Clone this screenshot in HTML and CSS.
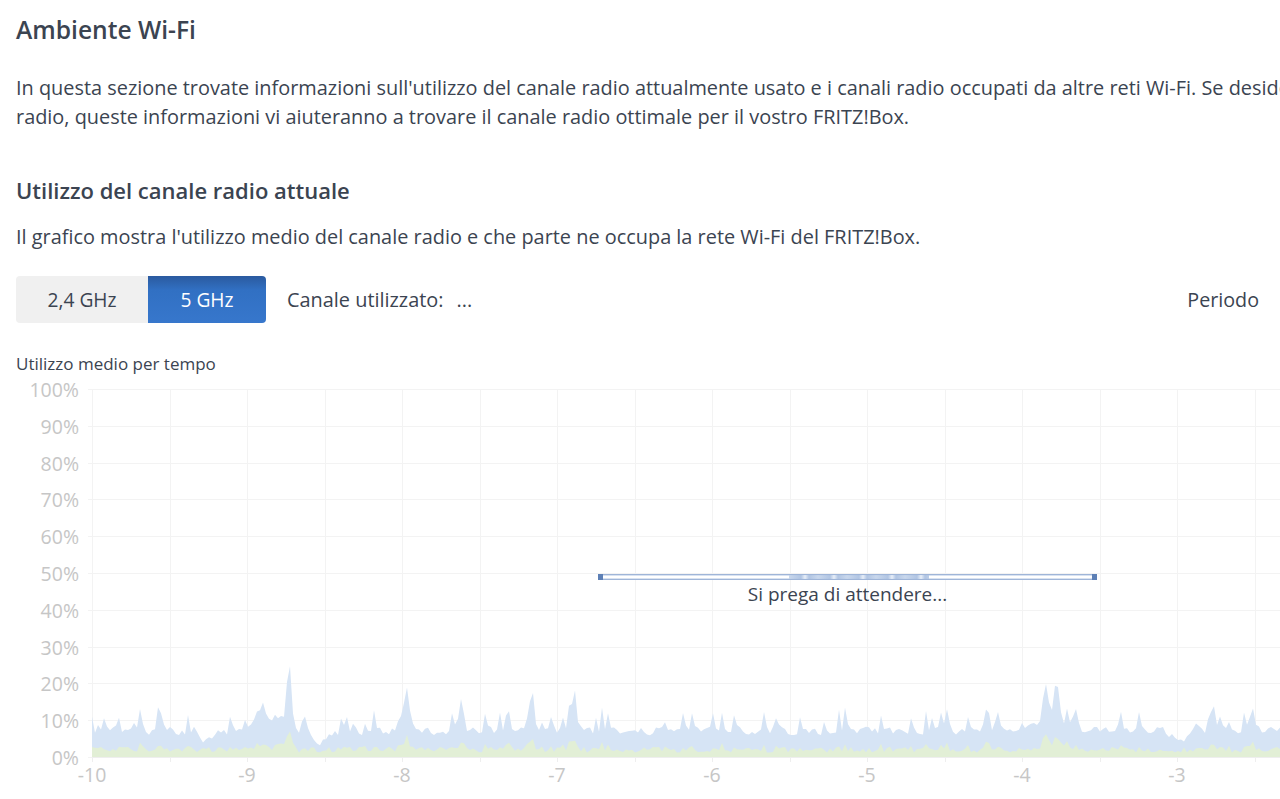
FILE: index.html
```html
<!DOCTYPE html>
<html lang="it">
<head>
<meta charset="utf-8">
<title>Ambiente Wi-Fi</title>
<link rel="stylesheet" href="styles.css">
</head>
<body>
<div class="page">
  <h1 class="title">Ambiente Wi-Fi</h1>
  <p class="intro">In questa sezione trovate informazioni sull'utilizzo del canale radio attualmente usato e i canali radio occupati da altre reti Wi-Fi. Se desiderate cambiare il canale radio, queste informazioni vi aiuteranno a trovare il canale radio ottimale per il vostro FRITZ!Box.</p>
  <h2 class="subtitle">Utilizzo del canale radio attuale</h2>
  <p class="desc">Il grafico mostra l'utilizzo medio del canale radio e che parte ne occupa la rete Wi-Fi del FRITZ!Box.</p>
  <div class="toolbar">
    <div class="segmented">
      <button class="seg">2,4 GHz</button>
      <button class="seg active">5 GHz</button>
    </div>
    <div class="channel">Canale utilizzato:<span class="channel-value">...</span></div>
    <div class="period">Periodo</div>
  </div>
  <div class="chart-title">Utilizzo medio per tempo</div>
  <div class="chart">
    <svg class="chart-svg" width="1280" height="424" viewBox="0 375 1280 424" xmlns="http://www.w3.org/2000/svg">
      <g id="grid" class="grid"></g>
      <path id="blue" class="area-blue" d=""></path>
      <path id="green" class="area-green" d=""></path>
      <g id="axes" class="axes"></g>
    </svg>
    <div class="loading">
      <div class="bar"><span class="cap left"></span><span class="glow"></span><span class="cap right"></span></div>
      <div class="loading-text">Si prega di attendere...</div>
    </div>
  </div>
</div>
<script src="script.js"></script>
</body>
</html>
```

FILE: styles.css
```css
html, body {
  margin: 0;
  padding: 0;
  background: #ffffff;
  overflow: hidden;
}
body {
  font-family: "Open Sans", Lato, sans-serif;
  color: #3b4451;
  width: 1280px;
  height: 799px;
}
.page {
  padding: 0 16px;
}
.title {
  margin: 15px 0 0;
  font-size: 24.6px;
  line-height: 30px;
  font-weight: 600;
  color: #3b4451;
}
.intro {
  margin: 28px 0 0;
  font-size: 19.9px;
  line-height: 29px;
  width: 1530px;
}
.subtitle {
  margin: 45px 0 0;
  font-size: 22px;
  line-height: 28px;
  font-weight: 600;
}
.desc {
  margin: 18px 0 0;
  font-size: 19.9px;
  line-height: 29px;
}
.toolbar {
  margin-top: 25px;
  display: flex;
  align-items: center;
  height: 47px;
}
.segmented {
  display: flex;
  height: 47px;
}
.seg {
  font-family: inherit;
  font-size: 19.2px;
  border: 0;
  margin: 0;
  padding: 0;
  height: 47px;
  color: #3b4451;
  background: #f0f0f0;
  width: 132px;
  border-radius: 4px 0 0 4px;
  cursor: pointer;
}
.seg.active {
  width: 118px;
  color: #ffffff;
  background: linear-gradient(#2a5a9f 0%, #3170c3 30%, #3777cc 100%);
  border-radius: 0 4px 4px 0;
}
.channel {
  margin-left: 21px;
  font-size: 19.9px;
}
.channel-value {
  margin-left: 13px;
}
.period {
  margin-left: auto;
  margin-right: 5px;
  font-size: 19.7px;
}
.chart-title {
  margin-top: 30px;
  font-size: 17px;
  line-height: 22px;
}
.chart {
  position: relative;
  margin-left: -16px;
  width: 1280px;
  height: 424px;
}
.chart-svg {
  display: block;
}
.grid line {
  stroke: #f3f3f3;
  stroke-width: 1;
}
.axes line {
  stroke: #eeeeee;
  stroke-width: 1;
}
.axes text {
  font-family: "Open Sans", Lato, sans-serif;
  font-size: 19.5px;
  fill: #c6c6c6;
}
.area-blue {
  fill: #d6e4f5;
}
.area-green {
  fill: #e2efd6;
}
.loading {
  position: absolute;
  left: 598px;
  top: 199px;
  width: 499px;
  display: flex;
  flex-direction: column;
  align-items: center;
}
.bar {
  position: relative;
  width: 499px;
  height: 6px;
  box-sizing: border-box;
  border: 1px solid #9fb5d8;
  background: #ffffff;
  box-shadow: inset 0 0 0 1px #d8e2f1;
}
.cap {
  position: absolute;
  top: -1px;
  width: 5px;
  height: 6px;
  background: #5d80b6;
}
.cap.left { left: -1px; }
.cap.right { right: -1px; }
.glow {
  position: absolute;
  left: 190px;
  top: 0;
  width: 140px;
  height: 4px;
  background: repeating-linear-gradient(90deg, #c3d3ea 0px, #a9bfe0 12px, #e6edf7 16px, #a9bfe0 20px, #c3d3ea 29px);
  opacity: 0.9;
}
.loading-text {
  margin-top: 2px;
  font-size: 19px;
  line-height: 25px;
  color: #3b4451;
}
```

FILE: script.js
```js
(function () {
  var NS = "http://www.w3.org/2000/svg";
  var X0 = 92, XN = 1280, YTOP = 389, YBOT = 757;
  var PX_PER_UNIT = 155;
  function y(p) { return YBOT - (YBOT - YTOP) * p / 100; }

  var grid = document.getElementById("grid");
  var axes = document.getElementById("axes");
  function line(g, x1, y1, x2, y2) {
    var l = document.createElementNS(NS, "line");
    l.setAttribute("x1", x1); l.setAttribute("y1", y1);
    l.setAttribute("x2", x2); l.setAttribute("y2", y2);
    g.appendChild(l);
  }
  function text(g, x, yy, s, anchor) {
    var t = document.createElementNS(NS, "text");
    t.setAttribute("x", x); t.setAttribute("y", yy);
    t.setAttribute("text-anchor", anchor);
    t.textContent = s;
    g.appendChild(t);
  }
  for (var k = 0; k <= 10; k++) {
    var yy = Math.round(y(k * 10)) + 0.5;
    line(grid, 88, yy, XN, yy);
    text(axes, 79, yy + 7, (k * 10) + "%", "end");
  }
  for (var j = 0; j < 20; j++) {
    var xx = Math.round(X0 + j * PX_PER_UNIT / 2) + 0.5;
    if (xx > XN) break;
    line(grid, xx, YTOP, xx, YBOT);
    line(axes, xx, YBOT, xx, YBOT + 5);
  }
  line(axes, X0, YBOT + 0.5, XN, YBOT + 0.5);
  for (var n = 0; n < 9; n++) {
    var lx = X0 + n * PX_PER_UNIT;
    if (lx > XN) break;
    text(axes, lx, 782, String(-10 + n), "middle");
  }

  var seed = 24680;
  function rnd() { seed = (seed * 1103515245 + 12345) % 2147483648; return seed / 2147483648; }
  var bumps = [
    [289, 23, 1.8], [282, 5, 10], [262, 4, 9], [256, 4, 3], [405, 6, 7], [118, 6, 1.5], [135, 5, 1.5],
    [532, 8, 2], [575, 6, 2], [1045, 12, 3], [1056, 6, 5], [1210, 7, 2.5], [1045, 3, 15], [160, 4, 5], [460, 5, 3], [775, 4, 2]
  ];
  var dips = [[205, 3, 10], [320, 3, 10], [1180, 2, 10]];
  var blue = [], green = [];
  var step = 3;
  var prev = 8;
  for (var x = X0; x <= XN + step; x += step) {
    var r = rnd();
    var v = 5.8 + 2.6 * r;
    if (rnd() < 0.22) v += 2.5 + 5 * rnd();
    for (var b = 0; b < bumps.length; b++) {
      var d = (x - bumps[b][0]) / bumps[b][2];
      v += bumps[b][1] * Math.exp(-d * d);
    }
    for (var q = 0; q < dips.length; q++) {
      var dd = (x - dips[q][0]) / dips[q][2];
      v -= dips[q][1] * Math.exp(-dd * dd);
    }
    v = 0.8 * v + 0.2 * prev;
    prev = v;
    if (x === X0) v = 11;
    var g = 1.2 + 1.6 * rnd() + Math.max(0, (v - 8) * 0.3);
    if (g > v - 1.5) g = v - 1.5;
    blue.push([Math.min(x, XN), v]);
    green.push([Math.min(x, XN), g]);
  }
  function area(pts) {
    var d = "M" + X0 + "," + YBOT;
    for (var i = 0; i < pts.length; i++) {
      d += " L" + pts[i][0].toFixed(1) + "," + y(pts[i][1]).toFixed(1);
    }
    d += " L" + XN + "," + YBOT + " Z";
    return d;
  }
  document.getElementById("blue").setAttribute("d", area(blue));
  document.getElementById("green").setAttribute("d", area(green));
})();
```
